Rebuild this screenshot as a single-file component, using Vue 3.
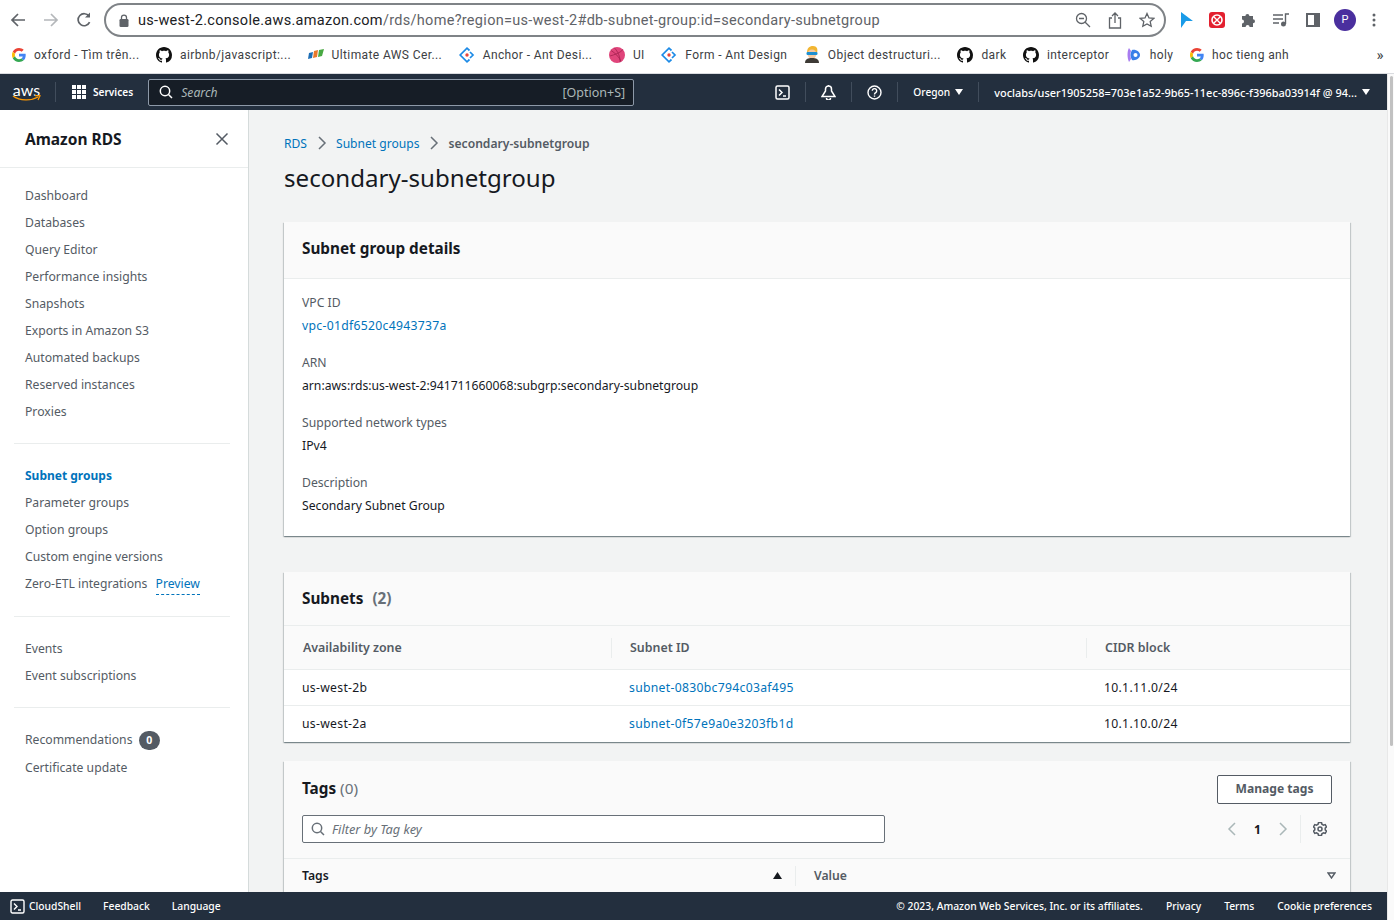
<script setup>
const bookmarks = [
  { icon: 'google', label: 'oxford - Tìm trên...' },
  { icon: 'github', label: 'airbnb/javascript:...' },
  { icon: 'fpt', label: 'Ultimate AWS Cer...' },
  { icon: 'ant', label: 'Anchor - Ant Desi...' },
  { icon: 'dribbble', label: 'UI' },
  { icon: 'ant', label: 'Form - Ant Design' },
  { icon: 'avatar', label: 'Object destructuri...' },
  { icon: 'github', label: 'dark' },
  { icon: 'github', label: 'interceptor' },
  { icon: 'holy', label: 'holy' },
  { icon: 'google', label: 'hoc tieng anh' },
];

const navMain = ['Dashboard', 'Databases', 'Query Editor', 'Performance insights', 'Snapshots', 'Exports in Amazon S3', 'Automated backups', 'Reserved instances', 'Proxies'];
const navGroups = ['Parameter groups', 'Option groups', 'Custom engine versions'];

const details = [
  { label: 'VPC ID', value: 'vpc-01df6520c4943737a', link: true },
  { label: 'ARN', value: 'arn:aws:rds:us-west-2:941711660068:subgrp:secondary-subnetgroup' },
  { label: 'Supported network types', value: 'IPv4' },
  { label: 'Description', value: 'Secondary Subnet Group' },
];

const subnets = [
  { zone: 'us-west-2b', id: 'subnet-0830bc794c03af495', cidr: '10.1.11.0/24' },
  { zone: 'us-west-2a', id: 'subnet-0f57e9a0e3203fb1d', cidr: '10.1.10.0/24' },
];

const githubPath = 'M8 0C3.58 0 0 3.58 0 8c0 3.54 2.29 6.53 5.47 7.59.4.07.55-.17.55-.38 0-.19-.01-.82-.01-1.49-2.01.37-2.53-.49-2.69-.94-.09-.23-.48-.94-.82-1.13-.28-.15-.68-.52-.01-.53.63-.01 1.08.58 1.23.82.72 1.21 1.87.87 2.33.66.07-.52.28-.87.51-1.07-1.78-.2-3.64-.89-3.64-3.95 0-.87.31-1.59.82-2.15-.08-.2-.36-1.02.08-2.12 0 0 .67-.21 2.2.82.64-.18 1.32-.27 2-.27s1.36.09 2 .27c1.53-1.04 2.2-.82 2.2-.82.44 1.1.16 1.92.08 2.12.51.56.82 1.27.82 2.15 0 3.07-1.87 3.75-3.65 3.95.29.25.54.73.54 1.48 0 1.07-.01 1.93-.01 2.2 0 .21.15.46.55.38A8.013 8.013 0 0016 8c0-4.42-3.58-8-8-8z';
</script>

<template>
  <div class="page">
    <!-- browser toolbar -->
    <div class="toolbar">
      <div class="tb-nav">
        <svg width="18" height="18" viewBox="0 0 18 18" fill="none" stroke="#5f6368" stroke-width="1.7"><path d="M16 9H3M9 3L3 9l6 6" /></svg>
        <svg width="18" height="18" viewBox="0 0 18 18" fill="none" stroke="#b4b7ba" stroke-width="1.7"><path d="M2 9h13M9 3l6 6-6 6" /></svg>
        <svg width="18" height="18" viewBox="0 0 18 18" fill="none" stroke="#5f6368" stroke-width="1.7"><path d="M14.6 11.2A6 6 0 1 1 14 5.2" /><path d="M15 1.5v5h-5" fill="#5f6368" stroke="none" /></svg>
      </div>
      <div class="omnibox">
        <svg class="lock" width="10" height="13" viewBox="0 0 10 13"><rect x="0.5" y="5" width="9" height="8" rx="1.3" fill="#5f6368" /><path d="M2.5 5.5V3.6a2.5 2.5 0 0 1 5 0v1.9" fill="none" stroke="#5f6368" stroke-width="1.3" /></svg>
        <span class="url"><b>us-west-2.console.aws.amazon.com</b>/rds/home?region=us-west-2#db-subnet-group:id=secondary-subnetgroup</span>
        <div class="omni-icons">
          <svg width="16" height="16" viewBox="0 0 16 16" fill="none" stroke="#5f6368" stroke-width="1.3"><circle cx="6.5" cy="6.5" r="5" /><path d="M10.2 10.2L15 15M4 6.5h5" /></svg>
          <svg width="14" height="17" viewBox="0 0 14 17" fill="none" stroke="#5f6368" stroke-width="1.3"><path d="M4 6H1.5v10h11V6H10M7 11V1.5M4 4l3-3 3 3" /></svg>
          <svg width="16" height="16" viewBox="0 0 16 16" fill="none" stroke="#5f6368" stroke-width="1.3"><path d="M8 1.5l2 4.4 4.8.5-3.6 3.2 1 4.7L8 11.9l-4.2 2.4 1-4.7L1.2 6.4 6 5.9z" /></svg>
        </div>
      </div>
      <div class="ext-icons">
        <svg width="13" height="16" viewBox="0 0 13 16"><path d="M1 0l12 9H6l-5 7z" fill="#1a9be8" /></svg>
        <svg width="16" height="16" viewBox="0 0 16 16"><rect width="16" height="16" rx="3" fill="#e3202f" /><circle cx="8" cy="8" r="5" fill="none" stroke="#fff" stroke-width="1.6" /><path d="M4.5 4.5l7 7M11.5 4.5l-7 7" stroke="#fff" stroke-width="1.4" /></svg>
        <svg width="16" height="16" viewBox="0 0 16 16"><path d="M1 5h3.4a2 2 0 1 1 4 0H12v3.2a2 2 0 1 1 0 4V16H8.6a2 2 0 1 0-4 0H1v-3.6a2 2 0 1 0 0-4z" fill="#5f6368" transform="translate(0 -1)" /></svg>
        <svg width="17" height="14" viewBox="0 0 17 14" fill="none" stroke="#5f6368" stroke-width="1.4"><path d="M0 2h10M0 6h10M0 10h6M16 1h-3.5v10" /><circle cx="10.5" cy="11" r="1.8" fill="#5f6368" /></svg>
        <svg width="14" height="14" viewBox="0 0 14 14"><path d="M0 0h14v14H0zM2 2v10h6V2z" fill="#5f6368" fill-rule="evenodd" /></svg>
        <span class="avatar">P</span>
        <svg width="4" height="14" viewBox="0 0 4 14" fill="#5f6368"><circle cx="2" cy="2" r="1.5" /><circle cx="2" cy="7" r="1.5" /><circle cx="2" cy="12" r="1.5" /></svg>
      </div>
    </div>

    <!-- bookmarks bar -->
    <div class="bookmarks">
      <div v-for="(b, i) in bookmarks" :key="i" class="bookmark">
        <svg v-if="b.icon === 'google'" width="14" height="14" viewBox="0 0 48 48">
          <path fill="#EA4335" d="M24 9.5c3.54 0 6.71 1.22 9.21 3.6l6.85-6.85C35.9 2.38 30.47 0 24 0 14.62 0 6.51 5.38 2.56 13.22l7.98 6.19C12.43 13.72 17.74 9.5 24 9.5z" />
          <path fill="#4285F4" d="M46.98 24.55c0-1.57-.15-3.09-.38-4.55H24v9.02h12.94c-.58 2.96-2.26 5.48-4.78 7.18l7.73 6c4.51-4.18 7.09-10.36 7.09-17.65z" />
          <path fill="#FBBC05" d="M10.53 28.59c-.48-1.45-.76-2.99-.76-4.59s.27-3.14.76-4.59l-7.98-6.19C.92 16.46 0 20.12 0 24c0 3.88.92 7.54 2.56 10.78l7.97-6.19z" />
          <path fill="#34A853" d="M24 48c6.48 0 11.93-2.13 15.89-5.81l-7.73-6c-2.15 1.45-4.92 2.3-8.16 2.3-6.26 0-11.57-4.22-13.47-9.91l-7.98 6.19C6.51 42.62 14.62 48 24 48z" />
        </svg>
        <svg v-else-if="b.icon === 'github'" width="16" height="16" viewBox="0 0 16 16"><path :d="githubPath" fill="#111" /></svg>
        <svg v-else-if="b.icon === 'fpt'" width="16" height="16" viewBox="0 0 16 16">
          <path d="M1 6l4-1-1 6-4 1z" fill="#1c6db5" /><path d="M6 4l4-1-1 7-4 1z" fill="#e8792b" /><path d="M11 3l5-1-2 7-4 1z" fill="#49a942" />
        </svg>
        <svg v-else-if="b.icon === 'ant'" width="16" height="16" viewBox="0 0 16 16">
          <path d="M10.500 3.500L8 1.200 1.200 8 8 14.800l2.500-2.300M11 5l3 3-3 3" fill="none" stroke="#1c8ae6" stroke-width="1.700" /><circle cx="8" cy="8" r="1.700" fill="#e8453c" />
        </svg>
        <svg v-else-if="b.icon === 'dribbble'" width="16" height="16" viewBox="0 0 16 16">
          <circle cx="8" cy="8" r="8" fill="#e0457b" /><path d="M2 3.500c4 2.500 8 6 10 11M1 9c5-1.500 10-3 13-6.500M5.500 1c3 3 6 9 5.500 14" fill="none" stroke="#a3214f" stroke-width="0.8" />
        </svg>
        <svg v-else-if="b.icon === 'avatar'" width="16" height="17" viewBox="0 0 16 17">
          <path d="M3 7c0-5 2-7 6-7s5 3 4 7z" fill="#f2b632" /><circle cx="8" cy="8" r="4.500" fill="#f5c9a0" /><rect x="2.500" y="6" width="11" height="3" rx="1.200" fill="#1d8fd1" /><path d="M1 17c0-4 3-5 7-5s7 1 7 5z" fill="#3d3a35" />
        </svg>
        <svg v-else width="16" height="16" viewBox="0 0 16 16">
          <path d="M3 1c-2 3-2 10 0 14 1-1 1-2 2-3-1-3-1-6 0-8z" fill="#a87cf0" /><path d="M6 3c4-1 8 2 8 5s-4 6-8 5c-2-3-2-7 0-10z" fill="#3a7fe8" /><circle cx="9.500" cy="8" r="2" fill="#fff" />
        </svg>
        <span>{{ b.label }}</span>
      </div>
      <span class="more">»</span>
    </div>

    <div class="viewport">
      <div class="console">
        <!-- console nav -->
        <header class="topnav">
          <div class="aws-logo">
            <span>aws</span>
            <svg width="29" height="7" viewBox="0 0 29 7" fill="none"><path d="M1 1c7 5 18 5 25 1" stroke="#f90" stroke-width="1.400" /><path d="M23 .6l5 .2-2 4.200" stroke="#f90" stroke-width="1.200" /></svg>
          </div>
          <i class="nav-sep first"></i>
          <svg class="grid-icon" width="14" height="14" viewBox="0 0 14 14" fill="#fff">
            <rect width="4" height="4" /><rect x="5" width="4" height="4" /><rect x="10" width="4" height="4" />
            <rect y="5" width="4" height="4" /><rect x="5" y="5" width="4" height="4" /><rect x="10" y="5" width="4" height="4" />
            <rect y="10" width="4" height="4" /><rect x="5" y="10" width="4" height="4" /><rect x="10" y="10" width="4" height="4" />
          </svg>
          <span class="services">Services</span>
          <div class="search">
            <svg width="14" height="14" viewBox="0 0 14 14" fill="none" stroke="#fff" stroke-width="1.500"><circle cx="6" cy="6" r="4.700" /><path d="M9.500 9.500L13 13" /></svg>
            <em>Search</em>
            <span class="shortcut">[Option+S]</span>
          </div>
          <div class="nav-right">
            <svg class="nav-ico" width="15" height="15" viewBox="0 0 15 15" fill="none" stroke="#fff" stroke-width="1.500"><rect x="1" y="1" width="13" height="13" rx="1.500" /><path d="M4 4.500L7 7.500 4 10.500M8 11h3" /></svg>
            <i class="nav-sep"></i>
            <svg class="nav-ico" width="15" height="16" viewBox="0 0 15 16" fill="none" stroke="#fff" stroke-width="1.500"><path d="M1 12.500h13L10.500 7V5a3 3 0 0 0-6 0v2zM7.500 1v1M5.500 14a2 2 0 0 0 4 0" /></svg>
            <i class="nav-sep"></i>
            <svg class="nav-ico" width="15" height="15" viewBox="0 0 15 15" fill="none" stroke="#fff" stroke-width="1.400"><circle cx="7.500" cy="7.500" r="6.500" /><path d="M5.300 5.800a2.200 2.200 0 1 1 3.400 1.900c-.8.500-1.200.9-1.200 1.800M7.500 10.500v1.300" /></svg>
            <i class="nav-sep"></i>
            <span class="nav-label region">Oregon</span>
            <i class="caret"></i>
            <i class="nav-sep"></i>
            <span class="nav-label account">voclabs/user1905258=703e1a52-9b65-11ec-896c-f396ba03914f @ 94...</span>
            <i class="caret"></i>
          </div>
        </header>

        <div class="body">
          <!-- side navigation -->
          <aside class="sidebar">
            <div class="side-head">
              <span>Amazon RDS</span>
              <svg width="14" height="14" viewBox="0 0 14 14" stroke="#545b64" stroke-width="1.500"><path d="M1.500 1.500l11 11M12.500 1.500l-11 11" /></svg>
            </div>
            <ul class="side-list first">
              <li v-for="n in navMain" :key="n">{{ n }}</li>
            </ul>
            <hr />
            <ul class="side-list second">
              <li class="active">Subnet groups</li>
              <li v-for="n in navGroups" :key="n">{{ n }}</li>
              <li>Zero-ETL integrations <a class="preview">Preview</a></li>
            </ul>
            <hr />
            <ul class="side-list">
              <li>Events</li>
              <li>Event subscriptions</li>
            </ul>
            <hr />
            <ul class="side-list">
              <li class="rec">Recommendations <span class="badge">0</span></li>
              <li>Certificate update</li>
            </ul>
          </aside>

          <main class="main">
            <nav class="crumbs">
              <a>RDS</a>
              <svg width="10" height="14" viewBox="0 0 10 14" fill="none" stroke="#687078" stroke-width="1.500"><path d="M2 1l6 6-6 6" /></svg>
              <a>Subnet groups</a>
              <svg width="10" height="14" viewBox="0 0 10 14" fill="none" stroke="#687078" stroke-width="1.500"><path d="M2 1l6 6-6 6" /></svg>
              <span>secondary-subnetgroup</span>
            </nav>
            <h1>secondary-subnetgroup</h1>

            <section class="card">
              <div class="card-head details-head"><h2>Subnet group details</h2></div>
              <div class="details">
                <div v-for="d in details" :key="d.label" class="detail">
                  <div class="d-label">{{ d.label }}</div>
                  <a v-if="d.link" class="d-value link">{{ d.value }}</a>
                  <div v-else class="d-value">{{ d.value }}</div>
                </div>
              </div>
            </section>

            <section class="card subnets">
              <div class="card-head subnets-head"><h2>Subnets <span class="count">(2)</span></h2></div>
              <div class="tr th">
                <div class="c1"><span>Availability zone</span></div>
                <div class="c2"><span>Subnet ID</span></div>
                <div class="c3"><span>CIDR block</span></div>
              </div>
              <div v-for="s in subnets" :key="s.id" class="tr td">
                <div>{{ s.zone }}</div>
                <a>{{ s.id }}</a>
                <div>{{ s.cidr }}</div>
              </div>
            </section>

            <section class="card tags">
              <div class="tags-top">
                <div class="tags-left">
                  <h2>Tags <span class="count light">(0)</span></h2>
                  <div class="filter">
                    <svg width="14" height="14" viewBox="0 0 14 14" fill="none" stroke="#687078" stroke-width="1.500"><circle cx="6" cy="6" r="4.700" /><path d="M9.500 9.500L13 13" /></svg>
                    <em>Filter by Tag key</em>
                  </div>
                </div>
                <div class="tags-right">
                  <button class="btn">Manage tags</button>
                  <div class="pager">
                    <svg width="10" height="14" viewBox="0 0 10 14" fill="none" stroke="#aab7b8" stroke-width="1.500"><path d="M8 1L2 7l6 6" /></svg>
                    <b>1</b>
                    <svg width="10" height="14" viewBox="0 0 10 14" fill="none" stroke="#aab7b8" stroke-width="1.500"><path d="M2 1l6 6-6 6" /></svg>
                    <i class="pager-sep"></i>
                    <svg width="14" height="14" viewBox="0 0 14 14" fill="none" stroke="#545b64" stroke-width="1.500"><path d="M5.500 1h3l.4 1.700 1.600.9 1.700-.5 1.300 2.400-1.300 1.200v1.600l1.300 1.200-1.300 2.400-1.700-.5-1.600.9-.4 1.700h-3l-.4-1.700-1.600-.9-1.700.5L.5 9.500l1.300-1.200V6.700L.5 5.500l1.300-2.400 1.700.5 1.600-.9z" transform="translate(0 -.500)" /><circle cx="7" cy="7" r="2" /></svg>
                  </div>
                </div>
              </div>
              <div class="tags-head">
                <div class="t-key">
                  <b>Tags</b>
                  <svg width="9" height="7" viewBox="0 0 9 7"><path d="M4.500 0L9 7H0z" fill="#16191f" /></svg>
                </div>
                <div class="t-value">
                  <b>Value</b>
                  <svg width="9" height="7" viewBox="0 0 9 7" fill="none" stroke="#545b64" stroke-width="1.400"><path d="M1 1h7L4.500 6z" /></svg>
                </div>
              </div>
            </section>
          </main>
        </div>

        <footer class="footer">
          <svg width="15" height="15" viewBox="0 0 15 15" fill="none" stroke="#fff" stroke-width="1.400"><rect x="1" y="1" width="13" height="13" rx="1.500" /><path d="M4 4.500L7 7.500 4 10.500M8 11h3" /></svg>
          <span class="f-cloud">CloudShell</span>
          <span class="f-item">Feedback</span>
          <span class="f-item">Language</span>
          <span class="f-copy">© 2023, Amazon Web Services, Inc. or its affiliates.</span>
          <span class="f-link">Privacy</span>
          <span class="f-link">Terms</span>
          <span class="f-link">Cookie preferences</span>
        </footer>
      </div>
      <div class="scrollbar"><div class="thumb"></div></div>
    </div>
  </div>
</template>

<style>
html, body { margin: 0; overflow: hidden; }
</style>

<style scoped>
.page {
  width: 1394px;
  height: 920px;
  display: flex;
  flex-direction: column;
  overflow: hidden;
  background: #fff;
  font-family: "Noto Sans", "Open Sans", sans-serif;
  font-size: 12.200px;
  color: #16191f;
}

/* browser chrome */
.toolbar {
  height: 40px;
  display: flex;
  align-items: center;
  flex-shrink: 0;
}
.tb-nav {
  width: 104px;
  display: flex;
  gap: 15px;
  padding-left: 9px;
  box-sizing: border-box;
}
.omnibox {
  width: 1062px;
  height: 34px;
  box-sizing: border-box;
  border: 2px solid #7f8387;
  border-radius: 17px;
  display: flex;
  align-items: center;
  padding: 0 9px 0 13px;
}
.url {
  margin-left: 9px;
  font-family: Roboto, sans-serif;
  font-size: 14.500px;
  letter-spacing: 0.3px;
  color: #5f6368;
  white-space: nowrap;
}
.url b { font-weight: 400; color: #202124; }
.omni-icons {
  margin-left: auto;
  display: flex;
  align-items: center;
  gap: 17px;
}
.ext-icons {
  display: flex;
  align-items: center;
  gap: 16px;
  padding-left: 14px;
}
.avatar {
  width: 22px;
  height: 22px;
  margin-left: -2px;
  border-radius: 50%;
  background: #4a2f9e;
  color: #fff;
  font: 11px/22px Roboto, sans-serif;
  text-align: center;
}
.bookmarks {
  height: 29px;
  display: flex;
  align-items: center;
  padding: 0 0 4px 12px;
  flex-shrink: 0;
  font-family: Roboto, sans-serif;
  font-size: 12px;
  letter-spacing: 0.4px;
  color: #3c4043;
}
.bookmark {
  display: flex;
  align-items: center;
  gap: 8px;
  margin-right: 16.500px;
  white-space: nowrap;
}
.more { margin-left: auto; margin-right: 10px; font-size: 15px; }

.viewport {
  flex: 1;
  min-height: 0;
  display: flex;
  border-top: 1px solid #dadce0;
}
.console {
  width: 1387px;
  display: flex;
  flex-direction: column;
}
.scrollbar {
  flex: 1;
  background: #fafafa;
  border-left: 1px solid #e8e8e8;
  padding: 2px 1px 0 2px;
}
.thumb {
  height: 670px;
  background: #c1c1c1;
  border-radius: 3px;
}

/* console nav */
.topnav {
  height: 36px;
  flex-shrink: 0;
  background: #232f3e;
  display: flex;
  align-items: center;
  color: #fff;
}
.aws-logo {
  width: 29px;
  margin-left: 12px;
  display: flex;
  flex-direction: column;
  align-items: center;
  line-height: 13px;
  font-family: Lato, sans-serif;
  font-size: 16px;
  color: #fff;
}
.aws-logo svg { margin-top: -1px; }
.nav-sep {
  width: 1px;
  height: 20px;
  background: #414d5c;
  margin: 0 15px;
}
.nav-sep.first { margin: 0 16px 0 14px; }
.services {
  margin-left: 7px;
  font-size: 10.100px;
  font-weight: 600;
}
.search {
  width: 486px;
  height: 27px;
  box-sizing: border-box;
  margin-left: 15px;
  background: #161d26;
  border: 1px solid #8d99a8;
  border-radius: 2px;
  display: flex;
  align-items: center;
  padding: 0 8px 0 10px;
}
.search em {
  margin-left: 8px;
  color: #aab7b8;
  font-size: 12.200px;
}
.shortcut {
  margin-left: auto;
  color: #aab7b8;
  font-size: 12.500px;
}
.nav-right {
  margin-left: auto;
  display: flex;
  align-items: center;
  padding-right: 17px;
}
.nav-label {
  font-size: 10.960px;
  font-weight: 500;
  white-space: nowrap;
}
.region { font-size: 10.200px; }
.caret {
  width: 0;
  height: 0;
  margin-left: 5px;
  border-left: 4px solid transparent;
  border-right: 4px solid transparent;
  border-top: 6px solid #fff;
}

.body {
  flex: 1;
  min-height: 0;
  display: flex;
}
.footer {
  height: 28px;
  flex-shrink: 0;
  background: #232f3e;
  color: #fff;
  display: flex;
  align-items: center;
  padding: 0 15px 0 10px;
  font-size: 10.300px;
  font-weight: 500;
}
.f-cloud { margin-left: 4px; }
.f-item { margin-left: 22px; }
.f-copy { margin-left: auto; }
.f-link { margin-left: 23px; }

/* sidebar */
.sidebar {
  width: 249px;
  flex-shrink: 0;
  box-sizing: border-box;
  background: #fff;
  border-right: 1px solid #d5dbdb;
  color: #545b64;
}
.side-head {
  height: 58px;
  box-sizing: border-box;
  border-bottom: 1px solid #eaeded;
  display: flex;
  align-items: center;
  justify-content: space-between;
  padding: 0 19px 0 25px;
  font-size: 15.500px;
  font-weight: 700;
  color: #16191f;
}
.side-list {
  list-style: none;
  margin: 0;
  padding: 18px 0 18px 25px;
}
.side-list.first { padding-top: 14px; padding-bottom: 18px; }
.side-list.second { padding-bottom: 19px; }
.side-list li {
  height: 27px;
  line-height: 27px;
  white-space: nowrap;
}
.side-list .active {
  color: #0073bb;
  font-weight: 700;
  font-size: 12px;
}
.preview {
  margin-left: 5px;
  color: #0073bb;
  border-bottom: 1px dashed #0073bb;
  padding-bottom: 2px;
}
.sidebar hr {
  margin: 0 18px 0 14px;
  border: 0;
  border-top: 1px solid #eaeded;
}
.side-list .rec { height: 28px; line-height: 27px; }
.badge {
  display: inline-block;
  width: 21px;
  height: 19px;
  margin-left: 3px;
  line-height: 19px;
  border-radius: 10px;
  background: #545b64;
  color: #fff;
  font-size: 10.500px;
  font-weight: 700;
  text-align: center;
}

/* main */
.main {
  flex: 1;
  min-width: 0;
  overflow: hidden;
  box-sizing: border-box;
  background: #f2f3f3;
  padding: 23px 37px 0 35px;
}
.crumbs {
  display: flex;
  align-items: center;
  height: 20px;
  gap: 9.500px;
  font-size: 12.100px;
  color: #545b64;
}
.crumbs a { color: #0073bb; }
.crumbs span { font-weight: 600; }
.main h1 {
  margin: 8px 0 27px;
  height: 34px;
  font-size: 24.100px;
  font-weight: 400;
  line-height: 34px;
}
.card {
  background: #fff;
  box-shadow: 0 1px 1px 0 rgba(0, 28, 36, 0.3), 1px 1px 1px 0 rgba(0, 28, 36, 0.15), -1px 1px 1px 0 rgba(0, 28, 36, 0.15);
}
.card-head {
  background: #fafafa;
  border-bottom: 1px solid #eaeded;
  display: flex;
  align-items: center;
  padding: 0 18px;
}
.details-head { height: 51px; padding-bottom: 5px; }
.subnets-head { height: 51px; padding-bottom: 2px; }
.card h2 {
  margin: 0;
  font-size: 15.300px;
  font-weight: 700;
}
.count {
  margin-left: 5px;
  color: #687078;
}
.count.light { margin-left: 0; font-weight: 400; }
.details { padding: 12px 18px 5px; }
.detail { height: 60px; }
.d-label {
  height: 23px;
  line-height: 23px;
  color: #545b64;
}
.d-value {
  display: block;
  line-height: 23px;
}
.link { color: #0073bb; letter-spacing: 0.3px; }
.subnets { margin-top: 36px; }
.tr {
  display: grid;
  grid-template-columns: 327px 475px 1fr;
  align-items: center;
}
.th {
  height: 43px;
  background: #fafafa;
  border-bottom: 1px solid #eaeded;
  color: #545b64;
  font-size: 12.400px;
  font-weight: 600;
}
.th .c1 { padding-left: 19px; }
.th .c2, .th .c3 {
  border-left: 1px solid #eaeded;
  padding-left: 18px;
  line-height: 20px;
}
.td {
  height: 36px;
  box-sizing: border-box;
  border-bottom: 1px solid #eaeded;
  letter-spacing: 0.3px;
}
.td:last-child { border-bottom: 0; padding-bottom: 2px; }
.td > * { padding-left: 18px; }
.td a { color: #0073bb; }
.tags {
  margin-top: 19px;
  background: #fafafa;
}
.tags-top {
  height: 98px;
  box-sizing: border-box;
  border-bottom: 1px solid #eaeded;
  display: flex;
  justify-content: space-between;
  padding: 14px 18px 0;
}
.tags-left h2 { line-height: 26px; }
.filter {
  width: 583px;
  height: 28px;
  box-sizing: border-box;
  margin-top: 14px;
  background: #fff;
  border: 1px solid #687078;
  border-radius: 2px;
  display: flex;
  align-items: center;
  padding-left: 8px;
  color: #687078;
}
.filter em { margin-left: 7px; font-size: 12.800px; }
.tags-right {
  display: flex;
  flex-direction: column;
  align-items: flex-end;
}
.btn {
  width: 115px;
  height: 29px;
  padding: 0 0 2px;
  background: #fff;
  border: 1px solid #545b64;
  border-radius: 2px;
  color: #545b64;
  font: 700 12.100px "Noto Sans", sans-serif;
}
.pager {
  display: flex;
  align-items: center;
  margin: 11px 5px 0 0;
  height: 28px;
}
.pager b { margin: 0 17px 0 17px; font-size: 12.200px; }
.pager-sep {
  width: 1px;
  height: 28px;
  background: #eaeded;
  margin: 0 12px 0 12px;
}
.tags-head {
  display: flex;
  height: 33px;
  align-items: center;
}
.tags-head b { font-weight: 600; }
.t-key {
  padding: 0 13px 0 18px;
  display: flex;
  justify-content: space-between;
  align-items: center;
  width: 480px;
}
.t-value {
  flex: 1;
  border-left: 1px solid #eaeded;
  padding: 0 14px 0 18px;
  display: flex;
  justify-content: space-between;
  align-items: center;
  color: #545b64;
  line-height: 20px;
}
</style>
